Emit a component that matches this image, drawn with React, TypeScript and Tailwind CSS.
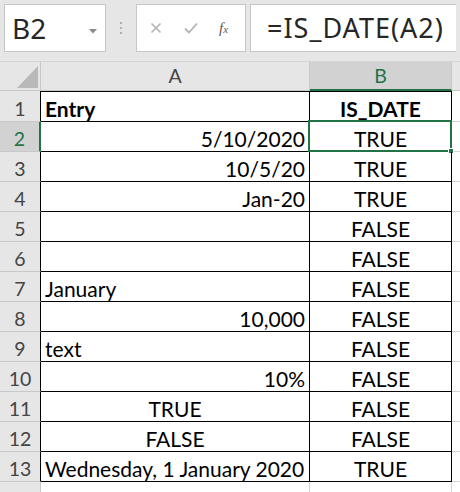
import React from 'react';

type Row = { a: string; b: string; align?: 'left' | 'right' | 'center'; bold?: boolean };

const rows: Row[] = [
  { a: 'Entry', b: 'IS_DATE', align: 'left', bold: true },
  { a: '5/10/2020', b: 'TRUE', align: 'right' },
  { a: '10/5/20', b: 'TRUE', align: 'right' },
  { a: 'Jan-20', b: 'TRUE', align: 'right' },
  { a: '', b: 'FALSE' },
  { a: '', b: 'FALSE' },
  { a: 'January', b: 'FALSE', align: 'left' },
  { a: '10,000', b: 'FALSE', align: 'right' },
  { a: 'text', b: 'FALSE', align: 'left' },
  { a: '10%', b: 'FALSE', align: 'right' },
  { a: 'TRUE', b: 'FALSE', align: 'center' },
  { a: 'FALSE', b: 'FALSE', align: 'center' },
  { a: 'Wednesday, 1 January 2020', b: 'TRUE', align: 'left' },
];

const cellFont = { fontFamily: 'Lato, "Open Sans", sans-serif' };

const alignClass = {
  left: 'justify-start pl-[4px]',
  right: 'justify-end pr-[4px]',
  center: 'justify-center',
};

function Toolbar() {
  return (
    <div className="flex h-[61px] items-start bg-[#e6e6e6] px-[4px] pt-[4px]" style={{ fontFamily: '"Noto Sans", "Open Sans", sans-serif' }}>
      {/* name box */}
      <div className="relative flex h-[48px] w-[102px] items-center border border-[#c6c6c6] bg-white pl-[7px] text-[28px] text-[#262626]">
        B2
        <svg className="absolute right-[8px] top-[24px]" width="8" height="5" viewBox="0 0 8 5">
          <path d="M0 0h8L4 4.5z" fill="#8a8a8a" />
        </svg>
      </div>
      <div className="flex h-[48px] w-[30px] flex-col items-center justify-center gap-[3px]">
        <span className="h-[2px] w-[2px] bg-[#b0b0b0]" />
        <span className="h-[2px] w-[2px] bg-[#b0b0b0]" />
        <span className="h-[2px] w-[2px] bg-[#b0b0b0]" />
      </div>
      {/* cancel / enter / fx */}
      <div className="flex h-[48px] w-[110px] items-center border border-[#c6c6c6] bg-white pl-[13px]">
        <svg width="12" height="12" viewBox="0 0 12 12">
          <path d="M1.5 1.5l9 9M10.5 1.5l-9 9" stroke="#b3b3b3" strokeWidth="1.6" />
        </svg>
        <svg className="ml-[22px]" width="14" height="12" viewBox="0 0 14 12">
          <path d="M1 6.5l4 4L13 1.5" stroke="#b3b3b3" strokeWidth="1.8" fill="none" />
        </svg>
        <span className="ml-[21px] italic text-[#595959] text-[15px]" style={{ fontFamily: '"Liberation Serif", serif' }}>
          f<span className="text-[11px]">x</span>
        </span>
      </div>
      {/* formula bar */}
      <div className="ml-[4px] flex h-[48px] flex-1 items-center border border-r-0 border-[#c6c6c6] bg-white pl-[16px] text-[27px] tracking-[1px] text-[#262626]">
        =IS_DATE(A2)
      </div>
    </div>
  );
}

function ColumnHeaders() {
  return (
    <div className="flex h-[30px] border-t border-[#d4d4d4] text-[19.5px] text-[#444]" style={cellFont}>
      <div className="relative h-full w-[41px] shrink-0 border-r border-b border-[#c8c8c8] bg-[#e6e6e6]">
        <svg className="absolute left-[17px] top-[4px]" width="21" height="22" viewBox="0 0 21 22">
          <path d="M21 0V22H0z" fill="#b9b9b9" />
        </svg>
      </div>
      <div className="flex h-full w-[269px] shrink-0 items-center justify-center border-r border-b border-[#c8c8c8] bg-[#e6e6e6]">A</div>
      <div className="flex h-full w-[142px] shrink-0 items-center justify-center border-r border-b-2 border-r-[#c8c8c8] border-b-[#217346] bg-[#d2d2d2] text-[#217346]">B</div>
      <div className="h-full flex-1 border-b border-[#c8c8c8] bg-[#e6e6e6]" />
    </div>
  );
}

function DataRow({ row, index }: { row: Row; index: number }) {
  const n = index + 1;
  const selected = n === 2;
  const first = n === 1;
  return (
    <div className={`flex ${first ? 'h-[31px]' : 'h-[30px]'} text-[21px] text-black`} style={cellFont}>
      <div
        className={`flex h-full w-[41px] shrink-0 items-end justify-center border-b border-b-[#c8c8c8] pb-[3px] text-[19.5px] leading-none ${
          selected ? 'border-r-2 border-r-[#217346] bg-[#d2d2d2] text-[#217346]' : 'border-r border-r-black bg-[#e6e6e6] text-[#444]'
        }`}
      >
        {n}
      </div>
      <div
        className={`flex h-full w-[269px] shrink-0 items-end whitespace-nowrap border-r border-b border-black pb-[2px] leading-none ${
          first ? 'border-t' : ''
        } ${selected ? 'w-[268px]' : ''} ${alignClass[row.align ?? 'left']} ${row.bold ? 'font-bold' : ''}`}
      >
        {row.a}
      </div>
      <div
        className={`relative flex h-full w-[142px] shrink-0 items-end justify-center border-r border-b border-black pb-[2px] leading-none ${
          first ? 'border-t' : ''
        } ${row.bold ? 'font-bold' : ''}`}
      >
        {row.b}
        {selected && (
          <div className="pointer-events-none absolute -left-[2px] -top-[2px] h-[32px] w-[144px] border-2 border-[#217346]">
            <div className="absolute -bottom-[4px] -right-[4px] h-[6px] w-[6px] border border-white bg-[#217346]" />
          </div>
        )}
      </div>
      <div className="h-full flex-1 border-b border-[#d4d4d4] bg-white" />
    </div>
  );
}

export default function App() {
  return (
    <div className="h-[492px] w-[460px] overflow-hidden bg-white">
      <Toolbar />
      <ColumnHeaders />
      {rows.map((r, i) => (
        <DataRow key={i} row={r} index={i} />
      ))}
      <div className="flex h-[30px] text-[19.5px]" style={cellFont}>
        <div className="flex h-full w-[41px] shrink-0 items-end justify-center border-r border-[#c8c8c8] bg-[#e6e6e6] pb-[3px] leading-none text-[#444]">
          14
        </div>
        <div className="h-full w-[269px] shrink-0 border-r border-[#d4d4d4]" />
        <div className="h-full w-[142px] shrink-0 border-r border-[#d4d4d4]" />
        <div className="h-full flex-1" />
      </div>
    </div>
  );
}
